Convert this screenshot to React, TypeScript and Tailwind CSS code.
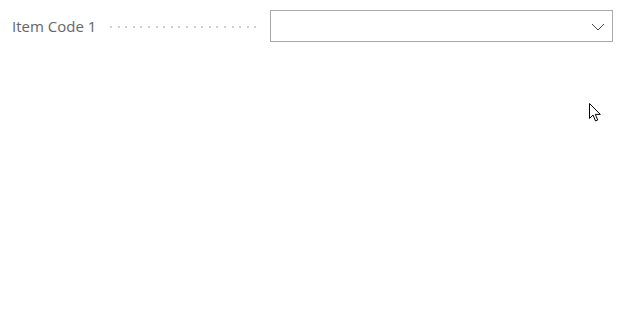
export default function App() {
  return (
    <div className="relative h-[323px] w-full bg-white font-['Open_Sans','Noto_Sans',sans-serif]">
      {/* Field row */}
      <div className="flex items-center pl-3 pr-[18px] pt-[10px]">
        <label className="shrink-0 text-[15px] leading-none text-[#666666]">Item Code 1</label>
        <div className="ml-[14px] mr-[10px] mt-[2px] h-[2px] flex-1 bg-[repeating-linear-gradient(to_right,#d0d0d0_0_2px,transparent_2px_7.6px)]" />
        <button className="flex h-[32px] w-[343px] shrink-0 items-center justify-end border border-[#a8a8a8] bg-white pr-[7px]">
          <svg width="14" height="8" viewBox="0 0 14 8" fill="none" className="mt-[1px]">
            <path d="M1 1l6 6 6-6" stroke="#444" strokeWidth="1" />
          </svg>
        </button>
      </div>

      {/* Mouse cursor */}
      <svg
        className="absolute left-[589px] top-[103px]"
        width="13"
        height="20"
        viewBox="0 0 13 20"
      >
        <path
          d="M0.5 0.5v15l3.5-3.5 2.5 6 2.2-1-2.4-5.6h5z"
          fill="white"
          stroke="black"
          strokeWidth="1"
          strokeLinejoin="round"
        />
      </svg>
    </div>
  );
}
